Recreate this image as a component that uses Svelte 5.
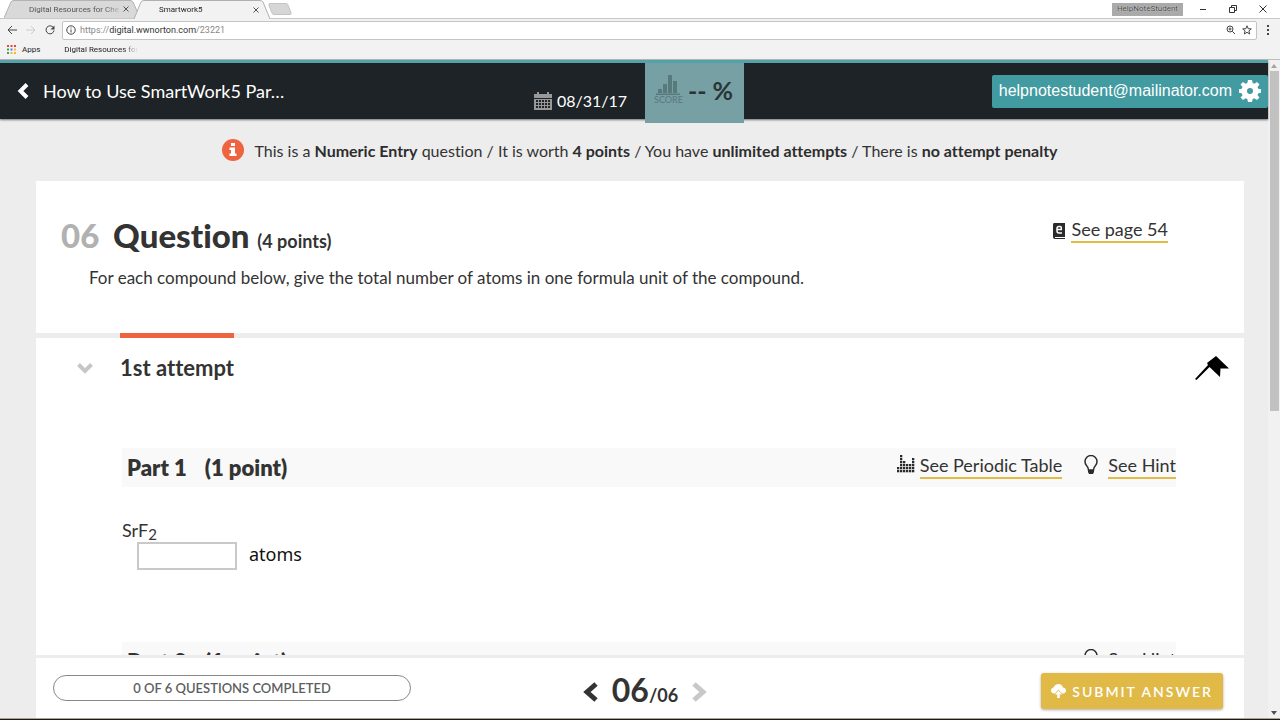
<script lang="ts">
  const tabs = [
    { title: "Digital Resources for Che", active: false },
    { title: "Smartwork5", active: true },
  ];

  const appColors = [
    "#e8453c", "#e8453c", "#e8453c",
    "#34a853", "#4285f4", "#f9bb2d",
    "#34a853", "#f9bb2d", "#f9bb2d",
  ];

  // Column heights of the periodic table icon, in dots
  const elements = [2, 6, 4, 3, 3, 5];

  const parts = [
    { name: "Part 1", points: "(1 point)", formula: "SrF", count: "2", unit: "atoms", table: true },
    { name: "Part 2", points: "(1 point)", formula: "", count: "", unit: "", table: false },
  ];

  let answer = $state("");
  let open = $state(true);
</script>

<div class="window">
  <div class="tab-strip">
    {#each tabs as tab}
      <div class="tab" class:active={tab.active}>
        <svg class="tab-shape" viewBox="0 0 136 19" preserveAspectRatio="none" aria-hidden="true">
          <path d="M0 19 L7 2 Q8 .5 10 .5 H126 Q128 .5 129 2 L136 19" />
        </svg>
        <span class="tab-title">{tab.title}</span>
        <button class="tab-close" aria-label="Close tab">
          <svg viewBox="0 0 6 6" width="6" height="6"><path d="M.5 .5l5 5M5.5 .5l-5 5" /></svg>
        </button>
      </div>
    {/each}
    <button class="new-tab" aria-label="New tab">
      <svg viewBox="0 0 24 12" width="24" height="12"><path d="M2 .5h16q1.500 0 2 1.500l3 7.500q.5 2-1 2H6q-1.500 0-2-1.500L1 2.500Q.5.5 2 .5z" /></svg>
    </button>
    <div class="window-controls">
      <span class="profile">HelpNoteStudent</span>
      <button aria-label="Minimize"><svg viewBox="0 0 8 8" width="8" height="8"><path d="M1 4.500h6" /></svg></button>
      <button aria-label="Restore"><svg viewBox="0 0 8 8" width="8" height="8"><path d="M.5 2.500h5v5h-5zM2.500 2V.5h5v5H6" /></svg></button>
      <button aria-label="Close"><svg viewBox="0 0 8 8" width="8" height="8"><path d="M.5.5l7 7M7.500.5l-7 7" /></svg></button>
    </div>
  </div>

  <div class="toolbar">
    <button aria-label="Back"><svg viewBox="0 0 10 10" width="10" height="10"><path d="M10 5H1M5 1L1 5l4 4" /></svg></button>
    <button class="faded" aria-label="Forward"><svg viewBox="0 0 10 10" width="10" height="10"><path d="M0 5h9M5 1l4 4-4 4" /></svg></button>
    <button aria-label="Reload"><svg viewBox="0 0 10 10" width="10" height="10"><path d="M8.300 2.500A4 4 0 1 0 9 5.500" /><path class="solid" d="M9.500.5v4h-4z" /></svg></button>
    <div class="address">
      <svg viewBox="0 0 10 10" width="10" height="10" aria-hidden="true"><circle cx="5" cy="5" r="4.200" /><path d="M5 4.500v3M5 2.500v1" /></svg>
      <span class="url">https://<b>digital.wwnorton.com</b>/23221</span>
      <svg viewBox="0 0 10 10" width="10" height="10" aria-hidden="true"><circle cx="4" cy="4" r="3" /><path d="M6.300 6.300L9 9M2.500 4h3M4 2.500v3" /></svg>
      <svg viewBox="0 0 10 10" width="10" height="10" aria-hidden="true"><path d="M5 .8l1.200 2.900 3.100.2-2.400 2 .8 3.100L5 7.300 2.300 9l.8-3.100-2.400-2 3.100-.2z" /></svg>
    </div>
    <button class="menu" aria-label="Menu"><svg viewBox="0 0 4 10" width="4" height="10"><path class="solid" d="M1 0h2v2H1zM1 4h2v2H1zM1 8h2v2H1z" /></svg></button>
  </div>

  <nav class="bookmarks">
    <a href="#apps">
      <svg viewBox="0 0 9 9" width="9" height="9" aria-hidden="true">
        {#each appColors as color, i}
          <rect x={(i % 3) * 3.5} y={Math.floor(i / 3) * 3.5} width="2" height="2" fill={color} />
        {/each}
      </svg>
      Apps
    </a>
    <a class="fade" href="#resources">Digital Resources for</a>
  </nav>

  <div class="viewport">
    <div class="page">
      <header>
        <div class="assignment">
          <button aria-label="Back to assignments">
            <svg viewBox="0 0 12 16" width="12" height="16"><path d="M10 1.500L3.500 8l6.500 6.500" /></svg>
          </button>
          <span>How to Use SmartWork5 Par…</span>
        </div>
        <div class="status">
          <span class="due">
            <svg viewBox="0 0 18 18" width="18" height="18" aria-hidden="true">
              <path d="M0 2h3V0h2v2h8V0h2v2h3v4H0z" />
              <path fill-rule="evenodd" d="M0 7h18v11H0zM2 8v2h2V8zm3 0v2h2V8zm3 0v2h2V8zm3 0v2h2V8zm3 0v2h2V8zM2 11v2h2v-2zm3 0v2h2v-2zm3 0v2h2v-2zm3 0v2h2v-2zm3 0v2h2v-2zM2 14v2h2v-2zm3 0v2h2v-2zm3 0v2h2v-2zm3 0v2h2v-2zm3 0v2h2v-2z" />
            </svg>
            08/31/17
          </span>
          <div class="score">
            <span class="score-label">
              <svg viewBox="0 0 24 20" width="24" height="20" aria-hidden="true"><path d="M0 18.500h24V20H0zM2 14h4v4H2zM7 9h4v9H7zM12 0h4v18h-4zM17 6h4v12h-4z" /></svg>
              SCORE
            </span>
            <strong>-- %</strong>
          </div>
        </div>
        <button class="account">
          helpnotestudent@mailinator.com
          <svg viewBox="0 0 22 22" width="22" height="22" aria-hidden="true">
            <path fill-rule="evenodd" d="M9 0h4l.7 3 1.600.700L18 2l2.500 2.500L18.500 7l.8 1.800L22 9.200v3.600l-2.700.5-.8 1.900 2 2.300L18 20l-2.700-1.700-1.600.7L13 22H9l-.7-3-1.600-.7L4 20l-2.500-2.500 2-2.300-.8-1.900L0 12.800V9.200l2.700-.4L3.500 7l-2-2.500L4 2l2.700 1.700L8.300 3zM11 8a3 3 0 1 0 0 6 3 3 0 0 0 0-6z" />
          </svg>
        </button>
      </header>

      <main>
        <p class="notice">
          <svg viewBox="0 0 22 22" width="22" height="22" aria-hidden="true">
            <circle cx="11" cy="11" r="11" />
            <path d="M9 4h4v3H9zM7.500 8.500H13v6h1.500V17h-7v-2.500H9V11H7.500z" />
          </svg>
          <span>This is a <b>Numeric Entry</b> question / It is worth <b>4 points</b> / You have <b>unlimited attempts</b> / There is <b>no attempt penalty</b></span>
        </p>

        <section class="card question">
          <div class="heading">
            <h1><span class="number">06</span> Question <small>(4 points)</small></h1>
            <div class="link page-link">
              <svg viewBox="0 0 12 16" width="12" height="16" aria-hidden="true">
                <path d="M1 0h11v16H2q-2 0-2-2V2q0-2 1-2z" />
                <path class="light" d="M2 14.500h10" />
                <path class="light thick" d="M3.500 6.500h4.800V4.500Q8.300 3.500 7 3.500H6Q4 3.500 4 5.500v2.500Q4 10 6 10h3" />
              </svg>
              <a href="#page-54">See page 54</a>
            </div>
          </div>
          <p>For each compound below, give the total number of atoms in one formula unit of the compound.</p>
        </section>

        <section class="card attempt">
          <div class="attempt-head">
            <button class="toggle" aria-label="Toggle attempt" aria-expanded={open} onclick={() => (open = !open)}>
              <svg viewBox="0 0 16 11" width="16" height="11"><path d="M1.500 1.500L8 8l6.500-6.500" /></svg>
            </button>
            <h2>1st attempt</h2>
            <button class="pin" aria-label="Pin question">
              <svg viewBox="0 0 34 24" width="34" height="24"><path d="M0 23L13 9l-1-2L21 0l13 12.500h-8.500l-.5 8.500-10.500-10L1.500 24z" /></svg>
            </button>
          </div>

          {#if open}
            {#each parts as part}
              <div class="part">
                <div class="part-head">
                  <h3>{part.name} <span>{part.points}</span></h3>
                  {#if part.table}
                    <div class="link table-link">
                      <svg viewBox="0 0 18 18" width="18" height="18" aria-hidden="true">
                        {#each elements as dots, column}
                          {#each Array(dots) as _, row}
                            <rect x={column * 3} y={15 - row * 3} width="2.300" height="2.300" />
                          {/each}
                        {/each}
                      </svg>
                      <a href="#periodic-table">See Periodic Table</a>
                    </div>
                  {/if}
                  <div class="link hint">
                    <svg viewBox="0 0 14 20" width="14" height="20" aria-hidden="true">
                      <path class="outline" d="M4.500 15Q4.500 12.500 2.500 10.500A6 6 0 1 1 11.500 10.500Q9.500 12.500 9.500 15z" />
                      <path d="M4 15h6v2l-1 2H5l-1-2z" />
                    </svg>
                    <a href="#hint">See Hint</a>
                  </div>
                </div>
                {#if part.formula}
                  <div class="formula">{part.formula}<sub>{part.count}</sub></div>
                  <label class="entry"><input type="text" bind:value={answer} /> {part.unit}</label>
                {/if}
              </div>
            {/each}
          {/if}
        </section>
      </main>

      <footer>
        <div class="progress">0 OF 6 QUESTIONS COMPLETED</div>
        <div class="pager">
          <button aria-label="Previous question"><svg viewBox="0 0 15 20" width="15" height="20"><path d="M13 2L4 10l9 8" /></svg></button>
          <span class="current">06<small>/06</small></span>
          <button class="faded" aria-label="Next question"><svg viewBox="0 0 15 20" width="15" height="20"><path d="M2 2l9 8-9 8" /></svg></button>
        </div>
        <div class="actions">
          <button class="submit">
            <svg viewBox="0 0 15 14" width="15" height="14" aria-hidden="true">
              <path fill-rule="evenodd" d="M3 9.500Q0 9 0 6.500 0 4 2.500 3.500 4 0 7.500 0T12 3.500Q15 4 15 6.500T12 9.500H11L7.500 5.500 4 9.500z" />
              <path d="M7.500 6.500l3.500 4H8.800V14H6.200v-3.500H4z" />
            </svg>
            SUBMIT ANSWER
          </button>
        </div>
      </footer>
    </div>

    <div class="scrollbar" aria-hidden="true">
      <svg viewBox="0 0 6 4" width="6" height="4"><path fill="#a3a3a3" d="M3 0l3 4H0z" /></svg>
      <div class="thumb"></div>
      <svg viewBox="0 0 6 4" width="6" height="4"><path fill="#505050" d="M3 4l3-4H0z" /></svg>
    </div>
  </div>
</div>

<style>
  :global(body) {
    margin: 0;
  }

  .window {
    display: flex;
    flex-direction: column;
    box-sizing: border-box;
    height: 100vh;
    overflow: hidden;
    border-bottom: 1px solid #1f1712;
    background: #fff;
    color: #333;
    font-family: Lato, "Liberation Sans", sans-serif;
    font-variant-ligatures: none;
  }

  button {
    padding: 0;
    border: 0;
    background: none;
    color: inherit;
    font: inherit;
    cursor: pointer;
  }

  svg {
    display: block;
    flex: none;
  }

  /* Browser chrome */
  .tab-strip,
  .toolbar,
  .bookmarks {
    display: flex;
    align-items: center;
    flex: none;
    box-sizing: border-box;
    font-family: Roboto, sans-serif;
    font-size: 8px;
  }

  .tab-strip {
    height: 19px;
    padding-left: 4px;
    border-bottom: 1px solid #c9c9c9;
  }

  .tab {
    position: relative;
    display: flex;
    align-items: center;
    box-sizing: border-box;
    width: 136px;
    height: 18px;
    margin-right: -6px;
    padding: 0 11px 0 25px;
    color: #555;
  }

  .tab.active {
    z-index: 1;
    height: 19px;
    margin-bottom: -1px;
    color: #222;
  }

  .tab-shape {
    position: absolute;
    inset: 0;
    width: 100%;
    height: 100%;
    fill: #d9d9d9;
    stroke: #b0b0b0;
  }

  .active .tab-shape {
    fill: #f2f2f2;
  }

  .tab-title {
    position: relative;
    flex: 1;
    white-space: nowrap;
    mask-image: linear-gradient(90deg, #000 80%, transparent);
  }

  .tab-close {
    position: relative;
    stroke: #555;
  }

  .new-tab {
    margin-left: 4px;
    fill: #d6d6d6;
    stroke: #c4c4c4;
  }

  .window-controls {
    display: flex;
    align-items: center;
    gap: 22px;
    margin-left: auto;
    padding-right: 13px;
    fill: none;
    stroke: #333;
  }

  .profile {
    align-self: flex-start;
    margin-right: -6px;
    padding: 0 5px 2px;
    background: #aaa;
    color: #444;
    line-height: 11px;
    text-shadow: 0 0 1px #fff;
  }

  .toolbar {
    gap: 9px;
    height: 22px;
    padding: 0 10px 0 7px;
    background: #f2f2f2;
    fill: none;
    stroke: #444;
  }

  .toolbar .faded {
    stroke: #ccc;
  }

  .toolbar .solid {
    fill: #444;
    stroke: none;
  }

  .address {
    display: flex;
    align-items: center;
    gap: 6px;
    flex: 1;
    height: 17px;
    margin-left: -2px;
    padding: 0 4px 0 3px;
    border: 1px solid #c4c4c4;
    border-radius: 2px;
    background: #fff;
    color: #888;
    font-size: 9px;
  }

  .url {
    flex: 1;
    margin-left: -2px;
  }

  .url b {
    color: #333;
    font-weight: 400;
  }

  .bookmarks {
    gap: 24px;
    height: 19px;
    padding: 0 0 1px 7px;
    border-bottom: 1px solid #bbb;
    background: #f2f2f2;
  }

  .bookmarks a {
    display: flex;
    align-items: center;
    gap: 6px;
    color: #222;
    text-decoration: none;
  }

  .bookmarks .fade {
    mask-image: linear-gradient(90deg, #000 80%, transparent);
  }

  /* Page */
  .viewport {
    display: flex;
    flex: 1;
    min-height: 0;
    border-bottom: 1px solid #a8a69c;
  }

  .page {
    display: flex;
    flex-direction: column;
    flex: 1;
    min-width: 0;
    background: #ededed;
  }

  header {
    display: grid;
    grid-template-columns: 1fr auto 1fr;
    grid-template-rows: 100%;
    align-items: center;
    flex: none;
    z-index: 1;
    height: 56px;
    border-top: 3px solid #55a1a8;
    background: #1e2327;
    color: #fff;
    box-shadow: 0 1px 2px #0008;
  }

  .assignment {
    display: flex;
    align-items: center;
    gap: 14px;
    padding-left: 17px;
    font-size: 18px;
    white-space: nowrap;
  }

  .assignment svg {
    fill: none;
    stroke: #fff;
    stroke-width: 4;
  }

  .status {
    display: flex;
    align-self: start;
    gap: 18px;
    padding-left: 10px;
  }

  .due {
    display: flex;
    align-items: center;
    gap: 5px;
    padding-top: 15px;
    font-size: 16px;
  }

  .due svg {
    fill: #999;
  }

  .score {
    display: flex;
    align-items: center;
    gap: 5px;
    box-sizing: border-box;
    width: 99px;
    height: 60px;
    padding: 0 9px 6px;
    background: #76a0a3;
    color: #2a3436;
  }

  .score-label {
    display: flex;
    flex-direction: column;
    align-items: center;
    color: #587a7d;
    font-size: 9px;
    line-height: 10px;
    fill: #587a7d;
  }

  .score strong {
    font-size: 25px;
    white-space: nowrap;
  }

  .account {
    display: flex;
    align-items: center;
    justify-self: end;
    gap: 7px;
    height: 33px;
    padding: 0 7px;
    border-radius: 2px;
    background: #429ba0;
    font-family: "Liberation Sans", sans-serif;
    font-size: 16px;
    fill: #fff;
  }

  main {
    flex: 1;
    min-height: 0;
    padding: 0 24px 0 36px;
    overflow: hidden;
  }

  .notice {
    display: flex;
    align-items: center;
    justify-content: center;
    gap: 10px;
    height: 62px;
    margin: 0;
    font-size: 16px;
  }

  .notice b {
    color: #2d2d2d;
  }

  .notice circle {
    fill: #ee6440;
  }

  .notice path {
    fill: #fff;
  }

  .card {
    background: #fff;
  }

  .question {
    box-sizing: border-box;
    height: 152px;
    margin-bottom: 5px;
    padding: 34px 76px 0 25px;
  }

  .heading {
    display: flex;
    justify-content: space-between;
  }

  h1 {
    margin: 0;
    font-size: 33px;
    font-weight: 900;
    line-height: 40px;
  }

  .number {
    margin-right: 6px;
    color: #b1b1b1;
  }

  h1 small {
    font-size: 18px;
    font-weight: 700;
  }

  .question p {
    margin: 5px 28px;
    font-size: 17px;
    line-height: 24px;
  }

  .link {
    display: flex;
    align-items: flex-start;
    gap: 6px;
    font-size: 18px;
    line-height: 24px;
  }

  .link svg {
    margin-top: 6px;
    fill: #2b2b2b;
  }

  .link a {
    border-bottom: 2px solid #e0bb48;
    color: #333;
    text-decoration: none;
  }

  .page-link {
    margin-top: 2px;
  }

  .link .light {
    fill: none;
    stroke: #fff;
  }

  .link .thick {
    stroke-width: 1.500;
  }

  .attempt-head {
    display: flex;
    align-items: center;
    height: 60px;
    padding: 0 15px 0 41px;
  }

  .toggle svg {
    fill: none;
    stroke: #c6c6c6;
    stroke-width: 4;
  }

  h2 {
    position: relative;
    flex: none;
    margin: 0 auto 0 27px;
    font-size: 22px;
    font-weight: 700;
    line-height: 60px;
  }

  h2::before {
    content: "";
    position: absolute;
    inset: -5px 0 auto 0;
    height: 5px;
    background: #ee6440;
  }

  .part {
    height: 194px;
    padding: 0 68px 0 86px;
  }

  .attempt-head + .part {
    padding-top: 50px;
  }

  .part-head {
    display: flex;
    align-items: center;
    height: 39px;
    padding-left: 5px;
    background: #f9f9f9;
  }

  .part-head .link {
    margin-bottom: 4px;
  }

  h3 {
    margin: 0 auto 0 0;
    font-size: 22px;
    font-weight: 800;
  }

  h3 span {
    margin-left: 13px;
  }

  .table-link {
    gap: 5px;
  }

  .table-link svg,
  .hint svg {
    margin-top: 2px;
  }

  .hint {
    gap: 10px;
    margin-left: 22px;
  }

  .hint .outline {
    fill: none;
    stroke: #2b2b2b;
    stroke-width: 1.500;
  }

  .formula {
    margin-top: 31px;
    font-size: 18px;
    line-height: 24px;
  }

  sub {
    font-size: 15px;
    line-height: 0;
    vertical-align: -3px;
  }

  .entry {
    display: flex;
    align-items: flex-start;
    gap: 12px;
    margin-left: 15px;
    color: #111;
    font-family: "Noto Sans", sans-serif;
    font-size: 18px;
    line-height: 24px;
  }

  .entry input {
    box-sizing: border-box;
    width: 100px;
    height: 28px;
    border: 2px solid #c9c9c9;
    background: #fff;
    font: inherit;
  }

  footer {
    display: grid;
    grid-template-columns: 1fr auto 1fr;
    align-items: center;
    flex: none;
    height: 60px;
    margin: 0 24px 0 36px;
    padding: 0 21px 0 17px;
    border-top: 3px solid #ededed;
    background: #fff;
  }

  .progress {
    box-sizing: border-box;
    width: 358px;
    height: 26px;
    border: 1px solid #888;
    border-radius: 13px;
    color: #5c5f5f;
    font-size: 13px;
    font-weight: 600;
    line-height: 24px;
    text-align: center;
  }

  .pager {
    display: flex;
    align-items: center;
    gap: 14px;
    padding: 8px 0 0 14px;
    fill: none;
    stroke: #333;
    stroke-width: 5;
  }

  .pager .faded {
    stroke: #c8c8c8;
  }

  .current {
    font-size: 32px;
    font-weight: 700;
    line-height: 40px;
  }

  .current small {
    font-size: 18px;
  }

  .actions {
    display: flex;
    justify-content: flex-end;
    padding-top: 6px;
  }

  .submit {
    display: flex;
    align-items: center;
    gap: 6px;
    height: 36px;
    padding: 0 10px;
    border-radius: 3px;
    background: #e0b946;
    color: #fff;
    font-size: 14px;
    font-weight: 600;
    letter-spacing: 2px;
    box-shadow: 0 1px 3px #0005;
    fill: #fff;
  }

  /* Scrollbar */
  .scrollbar {
    display: flex;
    flex-direction: column;
    align-items: center;
    flex: none;
    box-sizing: border-box;
    width: 12px;
    padding: 4px 0 3px;
    background: #f1f1f1;
  }

  .thumb {
    width: 9px;
    height: 340px;
    margin: 3px 0 auto;
    background: #c1c1c1;
  }
</style>
